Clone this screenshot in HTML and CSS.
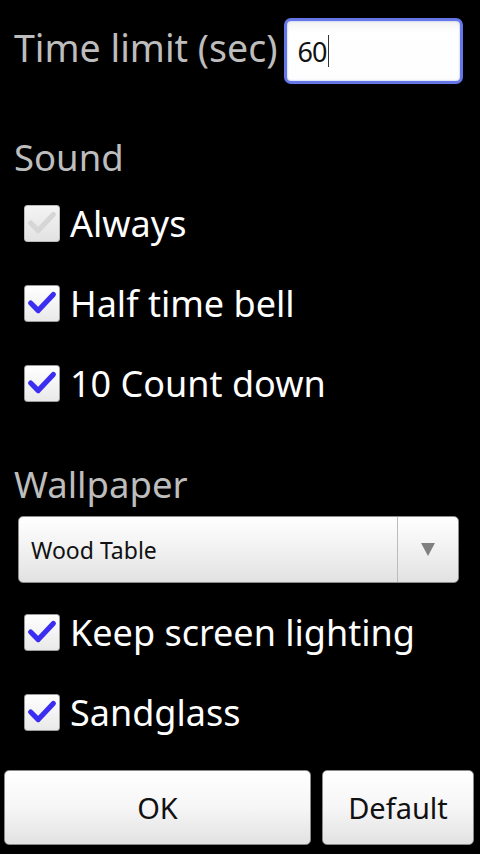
FILE: index.html
```html
<!DOCTYPE html>
<html lang="en">
<head>
  <meta charset="UTF-8">
  <meta name="viewport" content="width=device-width, initial-scale=1.0">
  <title>Settings</title>
  <link rel="stylesheet" href="styles.css">
</head>
<body>
  <div class="settings">
    <div class="limit-row">
      <span class="label">Time limit (sec)</span>
      <div class="field">60<span class="caret"></span></div>
    </div>

    <div class="section">Sound</div>
    <div class="check-row disabled">
      <span class="box"><svg viewBox="0 0 36 36"><path d="M6 18 L14 26 L30 9"/></svg></span>
      <span class="check-text">Always</span>
    </div>
    <div class="check-row">
      <span class="box"><svg viewBox="0 0 36 36"><path d="M6 18 L14 26 L30 9"/></svg></span>
      <span class="check-text">Half time bell</span>
    </div>
    <div class="check-row">
      <span class="box"><svg viewBox="0 0 36 36"><path d="M6 18 L14 26 L30 9"/></svg></span>
      <span class="check-text">10 Count down</span>
    </div>

    <div class="section wallpaper">Wallpaper</div>
    <div class="spinner">
      <span class="spinner-text">Wood Table</span>
      <span class="spinner-arrow"></span>
    </div>

    <div class="check-row first-after-spinner">
      <span class="box"><svg viewBox="0 0 36 36"><path d="M6 18 L14 26 L30 9"/></svg></span>
      <span class="check-text">Keep screen lighting</span>
    </div>
    <div class="check-row">
      <span class="box"><svg viewBox="0 0 36 36"><path d="M6 18 L14 26 L30 9"/></svg></span>
      <span class="check-text">Sandglass</span>
    </div>

    <div class="buttons">
      <button class="btn ok">OK</button>
      <button class="btn default">Default</button>
    </div>
  </div>
</body>
</html>
```

FILE: styles.css
```css
body {
  margin: 0;
  padding: 0;
  background-color: #000;
  font-family: "Noto Sans", "Open Sans", sans-serif;
  color: #fff;
}
.settings {
  width: 480px;
  height: 854px;
  overflow: hidden;
}
.limit-row {
  display: flex;
  align-items: center;
  padding: 18px 0 0 14px;
  height: 66px;
}
.label {
  font-size: 37.5px;
  color: #bdbdbd;
  white-space: nowrap;
  margin-top: -8px;
}
.field {
  box-sizing: border-box;
  flex: none;
  margin-left: 7px;
  width: 179px;
  height: 66px;
  border: 3px solid #6577e6;
  border-radius: 7px;
  background: linear-gradient(#f2f2f2, #ffffff 20%, #fdfdfd);
  box-shadow: inset 0 0 2px #9aa6f0;
  color: #111;
  font-size: 27px;
  display: flex;
  align-items: center;
  padding-left: 10px;
  letter-spacing: -1px;
}
.caret {
  display: inline-block;
  width: 1px;
  height: 32px;
  background-color: #333;
  margin-left: 2px;
}
.section {
  margin: 51px 0 0 14px;
  height: 44px;
  line-height: 44px;
  font-size: 36.5px;
  color: #bdbdbd;
}
.section + .check-row {
  margin-top: 4px;
}
.section.wallpaper {
  margin-top: 39px;
}
.check-row {
  display: flex;
  align-items: center;
  height: 80px;
  padding-left: 24px;
}
.check-row.first-after-spinner {
  margin-top: 9px;
}
.box {
  box-sizing: border-box;
  flex: none;
  width: 36px;
  height: 37px;
  border: 1px solid #9a9a9a;
  border-radius: 3px;
  background: linear-gradient(#ffffff, #e9e9e9);
  display: flex;
  align-items: center;
  justify-content: center;
}
.box svg {
  width: 34px;
  height: 34px;
}
.box path {
  fill: none;
  stroke: #3b2ef0;
  stroke-width: 5.5;
  stroke-linecap: round;
  stroke-linejoin: round;
}
.disabled .box {
  background: linear-gradient(#f4f4f4, #e2e2e2);
  border-color: #bbb;
}
.disabled .box path {
  stroke: #d6d6d6;
}
.check-text {
  margin-left: 10px;
  font-size: 36px;
  color: #fff;
  white-space: nowrap;
}
.spinner {
  box-sizing: border-box;
  margin: 10px 21px 0 18px;
  height: 67px;
  border: 1px solid #8c8c8c;
  border-radius: 5px;
  background: linear-gradient(#ffffff, #f4f4f4 40%, #e2e2e2);
  display: flex;
  align-items: center;
  color: #111;
}
.spinner-text {
  flex: 1;
  padding-left: 12px;
  font-size: 23px;
}
.spinner-arrow {
  width: 60px;
  align-self: stretch;
  border-left: 1px solid #bcbcbc;
  display: flex;
  align-items: center;
  justify-content: center;
}
.spinner-arrow::after {
  content: "";
  border-left: 7px solid transparent;
  border-right: 7px solid transparent;
  border-top: 13px solid #808080;
}
.buttons {
  display: flex;
  gap: 11px;
  margin-top: 18px;
  padding: 0 6px 0 4px;
}
.btn {
  height: 75px;
  border: 1px solid #8a8a8a;
  border-radius: 5px;
  background: linear-gradient(#ffffff, #f6f6f6 50%, #e2e2e2);
  font-family: "Noto Sans", "Open Sans", sans-serif;
  font-size: 29px;
  color: #111;
  padding: 0;
}
.btn.ok {
  width: 307px;
}
.btn.default {
  width: 152px;
}
```
